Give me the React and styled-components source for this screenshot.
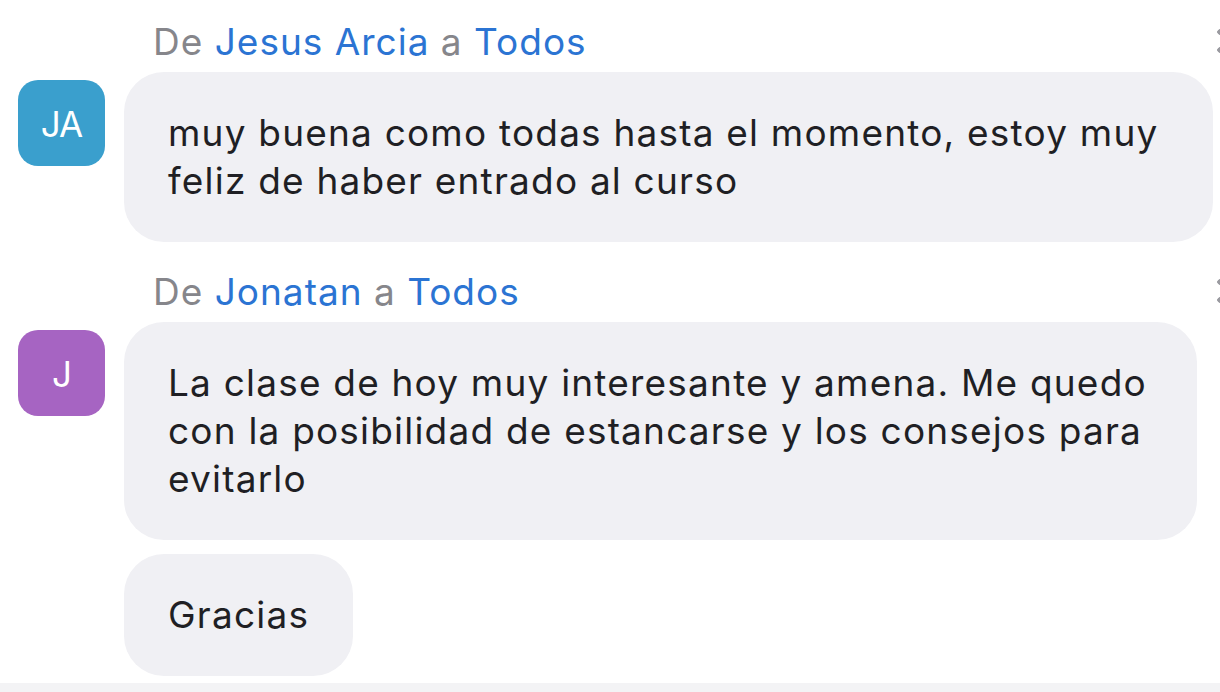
import React from 'react';
import styled, { createGlobalStyle } from 'styled-components';

const GlobalStyle = createGlobalStyle`
    html, body {
        margin: 0;
        padding: 0;
        background: #ffffff;
        overflow: hidden;
    }
    body {
        font-family: Inter, "Liberation Sans", Arial, sans-serif;
        -webkit-font-smoothing: antialiased;
    }
`;

const Page = styled.div`
    width: 1220px;
    height: 692px;
    display: flex;
    flex-direction: column;
    box-sizing: border-box;
    padding-top: 19px;
    overflow: hidden;
`;

const Feed = styled.div`
    flex: 1;
    min-height: 0;
    overflow: hidden;
    display: flex;
    flex-direction: column;
    gap: 27px;
`;

const Footer = styled.div`
    flex: none;
    height: 9px;
    background: #f3f3f5;
`;

const Group = styled.section`
    display: flex;
    flex-direction: column;
`;

const Header = styled.div`
    display: flex;
    justify-content: space-between;
    align-items: center;
    padding-left: 153px;
    font-size: 37px;
    letter-spacing: 1px;
    line-height: 46px;
    color: #86868b;
    margin-bottom: 7px;
`;

const Name = styled.span`
    color: #2b74d3;
`;

// cut-off "more" dots at the right edge of each header
const Dots = styled.span`
    flex: none;
    width: 3px;
    height: 24px;
    margin-top: -2px;
    background:
        radial-gradient(circle at 3px 3px, #9a9aa0 2.5px, transparent 3px) top / 6px 6px no-repeat,
        radial-gradient(circle at 3px 3px, #9a9aa0 2.5px, transparent 3px) bottom / 6px 6px no-repeat;
    background-position: left top, left bottom;
`;

const Row = styled.div`
    display: flex;
    align-items: flex-start;
    gap: 19px;
    padding-left: 18px;
`;

const Avatar = styled.div`
    flex: none;
    width: 87px;
    height: 86px;
    margin-top: 8px;
    border-radius: 20px;
    background: ${(p) => p.$color};
    color: #ffffff;
    display: flex;
    align-items: center;
    justify-content: center;
    font-size: 35px;
    letter-spacing: -1px;
    padding-top: 2px;
    box-sizing: border-box;
`;

const Bubbles = styled.div`
    display: flex;
    flex-direction: column;
    align-items: flex-start;
    gap: 14px;
`;

const Bubble = styled.div`
    box-sizing: border-box;
    width: ${(p) => (p.$width ? `${p.$width}px` : 'auto')};
    padding: 37px 44px;
    border-radius: 40px;
    background: #f0f0f4;
    color: #1f1f24;
    font-size: 37px;
    letter-spacing: 1.2px;
    line-height: 48px;
`;

const messages = [
    {
        from: 'Jesus Arcia',
        initials: 'JA',
        color: '#3a9fcd',
        bubbles: [
            { text: 'muy buena como todas hasta el momento, estoy muy feliz de haber entrado al curso', width: 1089 },
        ],
    },
    {
        from: 'Jonatan',
        initials: 'J',
        color: '#a664c2',
        bubbles: [
            { text: 'La clase de hoy muy interesante y amena. Me quedo con la posibilidad de estancarse y los consejos para evitarlo', width: 1073 },
            { text: 'Gracias' },
        ],
    },
];

const App = () => {
    return (
        <>
            <GlobalStyle />
            <Page>
                <Feed>
                    {messages.map((m) => (
                        <Group key={m.from}>
                            <Header>
                                <span>
                                    De <Name>{m.from}</Name> a <Name>Todos</Name>
                                </span>
                                <Dots />
                            </Header>
                            <Row>
                                <Avatar $color={m.color}>{m.initials}</Avatar>
                                <Bubbles>
                                    {m.bubbles.map((b, i) => (
                                        <Bubble key={i} $width={b.width}>{b.text}</Bubble>
                                    ))}
                                </Bubbles>
                            </Row>
                        </Group>
                    ))}
                </Feed>
                <Footer />
            </Page>
        </>
    );
};

export default App;
